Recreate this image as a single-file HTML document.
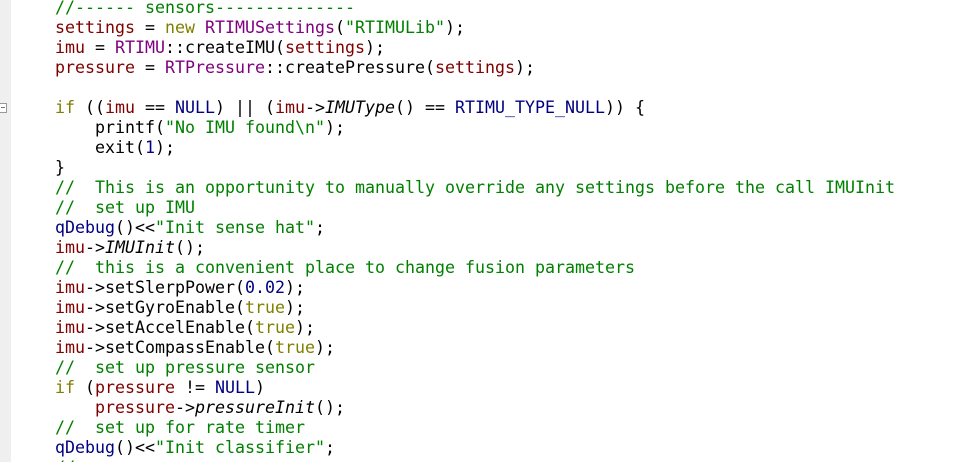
<!DOCTYPE html>
<html style="margin:0;width:954px;height:462px;overflow:hidden"><head><style>
body{margin:0;width:954px;height:462px;background:#fff;overflow:hidden;position:relative}
#g{position:absolute;left:0;top:0;width:11px;height:462px;background:#efefef}
#f{position:absolute;left:0;top:103px;width:6px;height:8px;border:1px solid #999;border-left:none;background:#fff}
#f:after{content:"";position:absolute;left:1px;top:3px;width:4px;height:1px;background:#777}
pre{position:absolute;left:55px;top:-2px;margin:0;font-family:"DejaVu Sans Mono","Liberation Mono",monospace;font-size:16.63px;line-height:20px;color:#000}
.v{color:#800000}.c{color:#800080}.k{color:#808000}.s{color:#008000}.n{color:#000080}.i{font-style:italic}
</style></head><body><div id="g"><div id="f"></div></div>
<pre><span class="s">//------ sensors--------------</span>
<span class="v">settings</span> = <span class="k">new</span> <span class="c">RTIMUSettings</span>(<span class="s">"RTIMULib"</span>);
<span class="v">imu</span> = <span class="c">RTIMU</span>::createIMU(<span class="v">settings</span>);
<span class="v">pressure</span> = <span class="c">RTPressure</span>::createPressure(<span class="v">settings</span>);

<span class="k">if</span> ((<span class="v">imu</span> == <span class="n">NULL</span>) || (<span class="v">imu</span>-&gt;<span class="i">IMUType</span>() == <span class="n">RTIMU_TYPE_NULL</span>)) {
    printf(<span class="s">"No IMU found\n"</span>);
    exit(<span class="n">1</span>);
}
<span class="s">//  This is an opportunity to manually override any settings before the call IMUInit</span>
<span class="s">//  set up IMU</span>
<span class="n">qDebug</span>()&lt;&lt;<span class="s">"Init sense hat"</span>;
<span class="v">imu</span>-&gt;<span class="i">IMUInit</span>();
<span class="s">//  this is a convenient place to change fusion parameters</span>
<span class="v">imu</span>-&gt;setSlerpPower(<span class="n">0.02</span>);
<span class="v">imu</span>-&gt;setGyroEnable(<span class="k">true</span>);
<span class="v">imu</span>-&gt;setAccelEnable(<span class="k">true</span>);
<span class="v">imu</span>-&gt;setCompassEnable(<span class="k">true</span>);
<span class="s">//  set up pressure sensor</span>
<span class="k">if</span> (<span class="v">pressure</span> != <span class="n">NULL</span>)
    <span class="v">pressure</span>-&gt;<span class="i">pressureInit</span>();
<span class="s">//  set up for rate timer</span>
<span class="n">qDebug</span>()&lt;&lt;<span class="s">"Init classifier"</span>;
<span class="s">//</span></pre>
</body></html>
